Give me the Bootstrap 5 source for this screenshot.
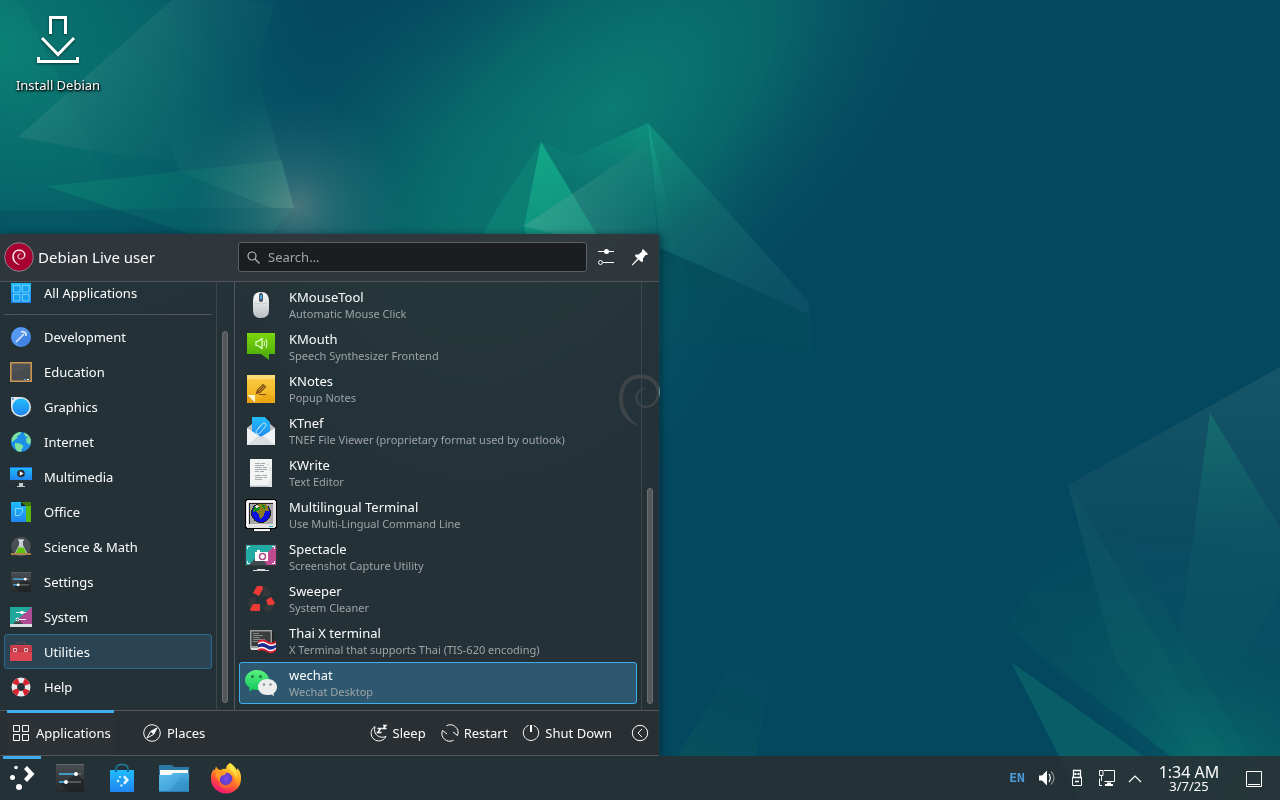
<!DOCTYPE html>
<html lang="en">
<head>
<meta charset="utf-8">
<meta name="viewport" content="width=device-width, initial-scale=1">
<title>Plasma Desktop</title>
<link href="https://cdn.jsdelivr.net/npm/bootstrap@5.3.0/dist/css/bootstrap.min.css" rel="stylesheet">
<style>
  :root { --edge: #50565a; --accent: #3daee9; --ink: #fcfcfc; --soft: #9ea3a6; }
  body { font-family: "Noto Sans", sans-serif; font-size: 13px; line-height: 17px; color: var(--ink); background: #04485f; }
  button { color: inherit; }
  .wallpaper { position: fixed; inset: 0; width: 100%; height: 100%; z-index: -1; }
  .plain { background: none; border: 0; padding: 0; }

  .desk-icon { width: 116px; padding-top: 8px; text-shadow: 1px 1px 2px #000, 0 1px 3px #000; }
  .desk-icon svg { filter: drop-shadow(0 1px 1px rgba(0,0,0,.5)); }
  .desk-icon span { margin-top: 5px; }

  .launcher { width: 660px; max-width: 100%; border-right: 1px solid rgba(20,40,50,.35); border-radius: 0 4px 0 0; overflow: hidden; box-shadow: 2px 0 6px rgba(0,30,40,.5); }
  .launch-head { height: 48px; background: rgba(49,54,59,.97); border-bottom: 1px solid var(--edge); padding: 0 2px 1px 4px; }
  .user-box { width: 234px; font-size: 15px; line-height: 20px; }
  .search-box { height: 30px; margin-right: 2px; padding: 0 8px; background: #1b1e20; border: 1px solid #5d6164; border-radius: 3px; }
  .search-box input { background: none; border: 0; outline: 0; color: var(--ink); }
  .search-box input::placeholder { color: #a1a5a8; opacity: 1; }
  .head-btn { width: 34px; height: 34px; }

  .launch-body { height: 428px; background: rgba(42,46,50,.86); }
  .cats { width: 217px; padding: 0 4px 6px; border-right: 1px solid #3c474c; overflow: hidden; }
  .cat-item { flex: none; height: 35px; padding: 1px 5px 0; gap: 12px; border: 1px solid transparent; border-radius: 3px; background: none; text-align: left; }
  .cat-item.chosen { background: #2a4453; border-color: #2d6a8b; }
  .cat-rule { flex: none; height: 1px; margin: 4px 0; background: var(--edge); }
  .track { width: 18px; padding: 0 7px 7px 5px; border-right: 1px solid var(--edge); }
  .track.end { border: 0; border-left: 1px solid #3c474c; padding-bottom: 6px; }
  .thumb { width: 6px; border-radius: 3px; background: #54585b; border: 1px solid #6a6e71; }
  .thumb.long { height: 372px; }
  .thumb.half { height: 216px; }
  .apps { padding: 2px 4px 6px; }
  .app-item { height: 42px; padding: 0 5px; gap: 12px; border: 1px solid transparent; border-radius: 3px; background: none; text-align: left; }
  .app-item.chosen { background: #2d586f; border-color: var(--accent); }
  .app-note { font-size: 11px; line-height: 16px; color: var(--soft); }

  .launch-foot { height: 46px; background: rgba(42,46,50,.97); border-top: 1px solid var(--edge); border-bottom: 1px solid var(--edge); padding: 0 10px 0 7px; }
  .foot-tab { width: 107px; margin-top: -1px; border-top: 3px solid transparent; padding-bottom: 2px; gap: 6px; }
  .foot-tab.chosen { padding-left: 5px; border-top-color: var(--accent); background: rgba(255,255,255,.01); }
  .foot-tab.other { margin-left: 29px; }
  .foot-btn { gap: 5px; margin-right: 15px; }

  .taskbar { height: 44px; background: rgba(42,46,50,.86); }
  .task { width: 52px; }
  .task.first { width: 44px; padding: 0 3px; }
  .task.first .bar { height: 3px; background: var(--accent); }
  .tray { padding-right: 2px; }
  .tray-btn { width: 30px; }
  .tray-btn.narrow { width: 26px; }
  .lang { color: #4b9bd8; font: bold 13px/16px "DejaVu Sans Mono", monospace; }
  .clock { width: 82px; text-align: center; }
  .clock .hour { font-size: 16px; line-height: 16px; }
  .clock .day { font-size: 13px; line-height: 12px; }
  .show-desk { width: 48px; }
</style>
</head>
<body class="min-vh-100 d-flex flex-column overflow-hidden">

<svg class="wallpaper" viewBox="0 0 1280 800" preserveAspectRatio="xMidYMid slice" aria-hidden="true">
  <defs>
    <radialGradient id="gl1" gradientUnits="userSpaceOnUse" cx="0" cy="0" r="1" gradientTransform="translate(0 45) rotate(30) scale(360 280)"><stop offset="0" stop-color="#0b8276"/><stop offset=".5" stop-color="#09706d" stop-opacity=".75"/><stop offset="1" stop-color="#06586a" stop-opacity="0"/></radialGradient>
    <radialGradient id="gl2" gradientUnits="userSpaceOnUse" cx="0" cy="0" r="1" gradientTransform="translate(610 110) rotate(-42) scale(440 235)"><stop offset="0" stop-color="#0b7c73"/><stop offset=".45" stop-color="#0a6f6c" stop-opacity=".75"/><stop offset="1" stop-color="#065263" stop-opacity="0"/></radialGradient>
    <radialGradient id="gl3" gradientUnits="userSpaceOnUse" cx="297" cy="207" r="110"><stop offset="0" stop-color="#8d9a98" stop-opacity=".5"/><stop offset=".35" stop-color="#5f8d8e" stop-opacity=".3"/><stop offset="1" stop-color="#2f7280" stop-opacity="0"/></radialGradient>
    <radialGradient id="gl4" gradientUnits="userSpaceOnUse" cx="480" cy="250" r="280"><stop offset="0" stop-color="#0b7d70" stop-opacity=".85"/><stop offset="1" stop-color="#086068" stop-opacity="0"/></radialGradient>
    <radialGradient id="gl5" gradientUnits="userSpaceOnUse" cx="1200" cy="780" r="150"><stop offset="0" stop-color="#0a7a70" stop-opacity=".75"/><stop offset="1" stop-color="#085f68" stop-opacity="0"/></radialGradient>
    <linearGradient id="pa" gradientUnits="userSpaceOnUse" x1="90" y1="60" x2="215" y2="150"><stop offset="0" stop-color="#4f9590" stop-opacity=".24"/><stop offset="1" stop-color="#2c6d77" stop-opacity="0"/></linearGradient>
    <linearGradient id="pb" gradientUnits="userSpaceOnUse" x1="47" y1="186" x2="294" y2="208"><stop offset="0" stop-color="#0b8474" stop-opacity=".6"/><stop offset=".6" stop-color="#0b7c72" stop-opacity=".35"/><stop offset="1" stop-color="#3b8f80" stop-opacity=".3"/></linearGradient>
    <linearGradient id="pm" gradientUnits="userSpaceOnUse" x1="290" y1="205" x2="240" y2="90"><stop offset="0" stop-color="#3b9a87" stop-opacity=".4"/><stop offset="1" stop-color="#2c7d77" stop-opacity="0"/></linearGradient>
    <linearGradient id="pc" gradientUnits="userSpaceOnUse" x1="541" y1="142" x2="560" y2="240"><stop offset="0" stop-color="#12a888"/><stop offset="1" stop-color="#10917f"/></linearGradient>
    <linearGradient id="pd" gradientUnits="userSpaceOnUse" x1="648" y1="123" x2="610" y2="220"><stop offset="0" stop-color="#0f9882" stop-opacity=".8"/><stop offset="1" stop-color="#0b746f" stop-opacity=".2"/></linearGradient>
    <linearGradient id="pe" gradientUnits="userSpaceOnUse" x1="648" y1="123" x2="770" y2="330"><stop offset="0" stop-color="#10947f" stop-opacity=".95"/><stop offset=".45" stop-color="#11686c" stop-opacity=".75"/><stop offset="1" stop-color="#12566a" stop-opacity=".5"/></linearGradient>
    <linearGradient id="pf" gradientUnits="userSpaceOnUse" x1="524" y1="226" x2="700" y2="230"><stop offset="0" stop-color="#5fb0a0" stop-opacity=".4"/><stop offset=".5" stop-color="#3b8d88" stop-opacity=".3"/><stop offset="1" stop-color="#1e6b74" stop-opacity="0"/></linearGradient>
    <linearGradient id="pg" gradientUnits="userSpaceOnUse" x1="648" y1="123" x2="680" y2="290"><stop offset="0" stop-color="#16a98c"/><stop offset=".5" stop-color="#137672" stop-opacity=".5"/><stop offset="1" stop-color="#0a5660" stop-opacity="0"/></linearGradient>
    <linearGradient id="ph" gradientUnits="userSpaceOnUse" x1="740" y1="260" x2="720" y2="370"><stop offset="0" stop-color="#054e5c"/><stop offset="1" stop-color="#04505a" stop-opacity="0"/></linearGradient>
    <linearGradient id="pi" gradientUnits="userSpaceOnUse" x1="1200" y1="380" x2="1180" y2="680"><stop offset="0" stop-color="#195669"/><stop offset=".5" stop-color="#0e4c61"/><stop offset="1" stop-color="#09586a" stop-opacity="0"/></linearGradient>
    <linearGradient id="pj" gradientUnits="userSpaceOnUse" x1="1210" y1="413" x2="1230" y2="690"><stop offset="0" stop-color="#15706f" stop-opacity=".85"/><stop offset=".45" stop-color="#0d5866" stop-opacity=".7"/><stop offset="1" stop-color="#095663" stop-opacity=".1"/></linearGradient>
    <linearGradient id="pk" gradientUnits="userSpaceOnUse" x1="1060" y1="530" x2="1170" y2="756"><stop offset="0" stop-color="#05505d" stop-opacity=".2"/><stop offset=".5" stop-color="#065560"/><stop offset="1" stop-color="#08606a"/></linearGradient>
    <linearGradient id="pl" gradientUnits="userSpaceOnUse" x1="765" y1="640" x2="720" y2="756"><stop offset="0" stop-color="#064b5b" stop-opacity="0"/><stop offset="1" stop-color="#06505e"/></linearGradient>
    <linearGradient id="pn" gradientUnits="userSpaceOnUse" x1="1240" y1="530" x2="1250" y2="756"><stop offset="0" stop-color="#06505e" stop-opacity="0"/><stop offset="1" stop-color="#075c64"/></linearGradient>
  </defs>
  <rect width="1280" height="800" fill="#04485f"/>
  <rect width="1280" height="800" fill="url(#gl4)"/>
  <rect width="1280" height="800" fill="url(#gl1)"/>
  <rect width="1280" height="800" fill="url(#gl2)"/>
  <path d="M20 0H275L256 72L294 208L120 209L50 60Z" fill="#075e68" opacity=".2"/>
  <path d="M18 137L172 0H245L275 5L256 72L290 190L200 165L95 151Z" fill="url(#pa)"/>
  <path d="M0 211L294 208L330 234H0Z" fill="#05505f" opacity=".45"/>
  <path d="M256 72L294 208L272 208L180 172L150 100Z" fill="url(#pm)"/>
  <path d="M115 209L294 208L270 234H190Z" fill="#0c7570" opacity=".35"/>
  <path d="M47 186L282 160L294 208L115 209Z" fill="url(#pb)"/>
  <rect width="1280" height="800" fill="url(#gl3)"/>
  <path d="M541 142L500 203L475 250H600L524 226Z" fill="#0d8c79" opacity=".5"/>
  <path d="M648 123L575 157L541 142L597 234L657 250L655 200Z" fill="url(#pd)"/>
  <path d="M541 142L524 226L528 240H600Z" fill="url(#pc)"/>
  <path d="M648 123L808 301L809 314L660 248L655 200Z" fill="url(#pe)"/>
  <path d="M808 301L814 360L660 340V248L809 314Z" fill="url(#ph)"/>
  <path d="M524 226L602 174L648 140L660 260Z" fill="url(#pf)"/>
  <path d="M648 123L693 310L657 210Z" fill="url(#pg)"/>
  <path d="M678 756L747 640L779 630L756 756Z" fill="url(#pl)"/>
  <path d="M1071 525L1005 627L1150 756L1170 775H1260L1160 600L1130 540Z" fill="url(#pk)" opacity=".6"/>
  <path d="M1020 590L1190 775H1229L1130 600Z" fill="#096068" opacity=".15"/>
  <path d="M1280 530V800H1220L1120 600Z" fill="url(#pn)" opacity=".7"/>
  <path d="M1280 367L1068 485L1115 660L1180 730L1280 700Z" fill="url(#pi)" opacity=".85"/>
  <path d="M1083 507L1068 485L1115 660L1190 756H1229L1180 680Z" fill="#157070" opacity=".18"/>
  <path d="M1210 413L1178 650L1184 740L1221 693L1280 593V528Z" fill="url(#pj)"/>
  <rect x="960" y="540" width="320" height="260" fill="url(#gl5)" opacity=".75"/>
  <path d="M1005 627L1011 662L1144 756H1170Z" fill="#04485f" opacity=".7"/>
  <path d="M900 756L1011 662L1059 756V800H900ZM1005 627L1011 662L900 756Z" fill="#04485f" opacity=".8"/>
  <path d="M1011 662L1059 756L1080 800H1200L1144 756Z" fill="#085d67"/>
  <path transform="translate(619 374)" fill="#fff" opacity=".7" d="M22.500 53C8 49 0 39 0 25C0 10 9 0 21 .5C33 0 42 9 41 19C40 29 33 34 26 34C20 33 16 28 16.500 23C17 17 22 13.500 27 14.500C22 15.500 18.500 19 18.500 24C18.500 29 22 32 27 32C33 31.500 38 26 38 19C37.500 10 31 4.500 22 4.500C11 4 3.500 12 4 25C4.500 38 12 48 22.500 53Z"/>
</svg>

<svg class="position-absolute" width="0" height="0" aria-hidden="true">
  <defs>
    <linearGradient id="blue" x1="0" y1="0" x2="0" y2="1"><stop offset="0" stop-color="#20bdfc"/><stop offset="1" stop-color="#2084f0"/></linearGradient>
    <linearGradient id="dark" x1="0" y1="0" x2="0" y2="1"><stop offset="0" stop-color="#4a4f54"/><stop offset="1" stop-color="#26292c"/></linearGradient>
    <linearGradient id="white" x1="0" y1="0" x2="0" y2="1"><stop offset="0" stop-color="#fdfdfd"/><stop offset="1" stop-color="#b9bec2"/></linearGradient>
    <linearGradient id="green" x1="0" y1="0" x2="0" y2="1"><stop offset="0" stop-color="#7bd60a"/><stop offset="1" stop-color="#47a80b"/></linearGradient>
    <linearGradient id="gold" x1="0" y1="0" x2="0" y2="1"><stop offset="0" stop-color="#f9ce46"/><stop offset="1" stop-color="#f0ad14"/></linearGradient>
    <linearGradient id="fold" x1="0" y1="0" x2="1" y2="1"><stop offset="0" stop-color="#5cc0f0"/><stop offset="1" stop-color="#3391cb"/></linearGradient>
    <linearGradient id="wgreen" x1="0" y1="0" x2="0" y2="1"><stop offset="0" stop-color="#5af07f"/><stop offset="1" stop-color="#12c75b"/></linearGradient>
    <linearGradient id="fox" x1=".8" y1="0" x2=".3" y2="1"><stop offset="0" stop-color="#fff04a"/><stop offset=".4" stop-color="#ffa51e"/><stop offset=".7" stop-color="#ff4a3c"/><stop offset="1" stop-color="#e8127a"/></linearGradient>
    <radialGradient id="foxin"><stop offset="0" stop-color="#7a4cf0"/><stop offset="1" stop-color="#5b3cc4"/></radialGradient>
    <symbol id="i-conf" viewBox="0 0 28 28"><path d="M0 0H28V28H0Z" fill="url(#dark)"/><path d="M4 20L21 10L28 16V28H12Z" fill="#1d2022" opacity=".6"/><path d="M0 .5H28" stroke="#62676b"/><path d="M3 10H25M3 18H25" stroke="#66696c" stroke-width="1.500"/><path d="M3 10H20M3 18H10" stroke="#3daee9" stroke-width="1.500"/><circle cx="20" cy="10" r="2" fill="#fff"/><circle cx="10" cy="18" r="2" fill="#fff"/></symbol>
    <symbol id="i-tune" viewBox="0 0 18 18"><path d="M1 3.500H17M6 14.500H17" stroke="#fff" stroke-width="1.200"/><circle cx="9.500" cy="3.500" r="2.500" fill="#fff"/><circle cx="3.500" cy="14.500" r="2" fill="none" stroke="#fff"/></symbol>
  </defs>
</svg>

<main class="flex-grow-1 d-flex flex-column align-items-start">
  <button type="button" class="plain desk-icon d-flex flex-column align-items-center">
    <svg width="64" height="64" fill="none" stroke="#fff" stroke-width="3"><path d="M24.500 26V9.500H39.500V26M16 30L32 46.500L48 30M12.500 49V53.500H51.500V49"/></svg>
    <span>Install Debian</span>
  </button>

  <section class="launcher mt-auto" aria-label="Application Launcher">
    <header class="launch-head d-flex align-items-center">
      <div class="user-box d-flex align-items-center gap-1 flex-shrink-0">
        <svg width="30" height="30" viewBox="0 0 30 30" aria-hidden="true"><circle cx="15" cy="15" r="14.300" fill="#a80030" stroke="#85888b"/><path transform="translate(8.500 7.500) scale(.31 .29)" fill="#fff" stroke="#fff" d="M22.500 53C8 49 0 39 0 25C0 10 9 0 21 .5C33 0 42 9 41 19C40 29 33 34 26 34C20 33 16 28 16.500 23C17 17 22 13.500 27 14.500C22 15.500 18.500 19 18.500 24C18.500 29 22 32 27 32C33 31.500 38 26 38 19C37.500 10 31 4.500 22 4.500C11 4 3.500 12 4 25C4.500 38 12 48 22.500 53Z"/></svg>
        <span>Debian Live user</span>
      </div>
      <label class="search-box flex-grow-1 d-flex align-items-center gap-2">
        <svg width="13" height="13" fill="none" stroke="#b5b8ba" stroke-width="1.200" aria-hidden="true"><circle cx="5" cy="5" r="4"/><path d="M8 8L12.500 12.500"/></svg>
        <input class="flex-grow-1 p-0" type="text" placeholder="Search..." aria-label="Search">
      </label>
      <button type="button" class="plain head-btn" aria-label="Configure"><svg width="18" height="18"><use href="#i-tune"/></svg></button>
      <button type="button" class="plain head-btn" aria-label="Keep open"><svg width="18" height="18" fill="#fff"><path d="M12 1L17 6L16 7H14.500L12 10.500V13.500L10.500 14L7.500 11.500L1.500 17.500L.8 16.800L6.500 10.500L4 8L4.500 6.500H7.500L11 3.500V2Z"/></svg></button>
    </header>

    <div class="launch-body d-flex">
      <nav class="cats d-flex flex-column justify-content-end flex-shrink-0" aria-label="Categories">
        <button type="button" class="cat-item d-flex align-items-center"><svg width="22" height="22"><path d="M1 1H21V21H1Z" fill="url(#blue)"/><path d="M3.500 3.500H10V10H3.500ZM12.500 3.500H19V10H12.500ZM3.500 12.500H10V19H3.500ZM12.500 12.500H19V19H12.500Z" fill="#16a0ee" stroke="#6ccfff"/></svg>All Applications</button>
        <div class="cat-rule"></div>
        <button type="button" class="cat-item d-flex align-items-center"><svg width="22" height="22"><circle cx="11" cy="11" r="10" fill="#5598f2"/><path d="M7 17L18 6L21 11A10 10 0 0 1 11 21Z" fill="#2f6fd0" opacity=".5"/><path d="M6 16L14 8" stroke="#dfe9f5" stroke-width="1.500"/><path d="M11 6C13 5.200 14.500 5.800 16 7.500V10" stroke="#dfe9f5" stroke-width="1.600" fill="none"/></svg>Development</button>
        <button type="button" class="cat-item d-flex align-items-center"><svg width="22" height="22"><path d="M.8 1.800H21.200V20.200H.8Z" fill="#4e5255" stroke="#c8964f" stroke-width="1.600"/><path d="M2 13L20 6V19H2Z" fill="#484c4f"/><path d="M14 18.500H16" stroke="#3daee9"/><path d="M17 18.500H19" stroke="#fff"/></svg>Education</button>
        <button type="button" class="cat-item d-flex align-items-center"><svg width="22" height="22"><path d="M1 1H11A10 10 0 1 1 1 11Z" fill="#e4e6e8"/><circle cx="11" cy="11" r="8.500" fill="url(#blue)"/><circle cx="2.800" cy="2.800" r="1" fill="#2f8fe8"/></svg>Graphics</button>
        <button type="button" class="cat-item d-flex align-items-center"><svg width="22" height="22"><circle cx="11" cy="11" r="10" fill="#1d8fe8"/><path d="M1.500 8C3 3.500 7 1 11 1L10 3.500L7 5L7.500 7L4.500 9L2 11.500ZM14 1.500C18 3 20 5.500 21 9L20 14L16.500 11.500L16 8L18 6L15 5ZM5 12L10 12.500L13.500 15L12 18L10.500 21L7 20L5 16Z" fill="#7fe3a0"/></svg>Internet</button>
        <button type="button" class="cat-item d-flex align-items-center"><svg width="22" height="22"><path d="M0 1H22V14H0Z" fill="url(#blue)"/><path d="M0 1H22V2H0Z" fill="#1d6fd8"/><path d="M0 14H22V15H0Z" fill="#303438"/><circle cx="11" cy="7.500" r="3.800" fill="#2b2f33"/><path d="M9.800 5.300V9.700L13.500 7.500Z" fill="#fff"/><path d="M9 17H13V20H15V21H7V20H9Z" fill="#c5c9cc"/></svg>Multimedia</button>
        <button type="button" class="cat-item d-flex align-items-center"><svg width="22" height="22"><path d="M1 1H12L21 5V21H1Z" fill="url(#blue)"/><path d="M16 4L21 5V21H16Z" fill="#58b910"/><path d="M11 1H21V5H16Z" fill="#3f7d0a"/><path d="M11 1L16 5H11Z" fill="#222"/><path d="M5.500 7.500H12.500V11L9.500 14.500H5.500Z" fill="none" stroke="#7fdcff"/></svg>Office</button>
        <button type="button" class="cat-item d-flex align-items-center"><svg width="22" height="22"><circle cx="11" cy="10.500" r="9.800" fill="#4b5054"/><path d="M9 4H13V9L17 17H5L9 9Z" fill="#c7cccf"/><path d="M8.300 11.500H13.700L16 17H6Z" fill="#5fc30c"/><path d="M8 4H14" stroke="#fff"/><path d="M1 18H21" stroke="#d29a50" stroke-width="1.500"/></svg>Science &amp; Math</button>
        <button type="button" class="cat-item d-flex align-items-center"><svg width="22" height="22" viewBox="-1 -1 22 22"><use href="#i-conf" width="20" height="20"/></svg>Settings</button>
        <button type="button" class="cat-item d-flex align-items-center"><svg width="22" height="22"><path d="M0 1H22V18H0Z" fill="#1fa99c"/><path d="M22 1V18H7L6 15Z" fill="#b04a95"/><path d="M3 18L8 13L13 18Z" fill="#40474b"/><path d="M0 18H22V21H0Z" fill="#dcdfe1"/><path d="M6 6.500H16M9 13.500H16" stroke="#eef"/><circle cx="12" cy="6.500" r="1.800" fill="#fff"/><circle cx="7.500" cy="13.500" r="1.500" fill="none" stroke="#fff"/></svg>System</button>
        <button type="button" class="cat-item chosen d-flex align-items-center" aria-current="true"><svg width="22" height="22"><path d="M6.500 5V2.500Q6.500 1.500 7.500 1.500H14.500Q15.500 1.500 15.500 2.500V5" fill="none" stroke="#4a4d50" stroke-width="1.500"/><path d="M1 4H21L22 10V20H0V10Z" fill="#da4453"/><path d="M0 10H22V11H0Z" fill="#b5303f"/><path d="M0 5H22V10H0Z" fill="#c53b4a"/><path d="M3.500 7.500H6.500V10.500H3.500ZM14.500 7.500H17.500V10.500H14.500Z" fill="#b5303f" stroke="#d9c5c8"/></svg>Utilities</button>
        <button type="button" class="cat-item d-flex align-items-center"><svg width="22" height="22" fill="none"><circle cx="11" cy="11" r="6.700" stroke="#e8e9ea" stroke-width="5.600"/><circle cx="11" cy="11" r="6.700" stroke="#d8232f" stroke-width="5.600" stroke-dasharray="5.260 5.260" stroke-dashoffset="-2.630"/></svg>Help</button>
      </nav>
      <div class="track d-flex flex-column justify-content-end flex-shrink-0"><div class="thumb long"></div></div>

      <div class="apps flex-grow-1 d-flex flex-column">
        <button type="button" class="app-item d-flex align-items-center"><svg width="32" height="32"><path d="M8 12Q8 3 16 3Q24 3 24 12V21Q24 29 16 29Q8 29 8 21Z" fill="url(#white)"/><path d="M9 14Q16 16 23 14" stroke="#c9ced2" fill="none"/><path d="M16 3V13" stroke="#9aa0a5"/><rect x="14" y="4" width="4" height="9" rx="2" fill="#46535c"/><rect x="15" y="6" width="2" height="4" fill="#3daee9"/></svg><span><span class="d-block">KMouseTool</span><span class="d-block app-note">Automatic Mouse Click</span></span></button>
        <button type="button" class="app-item d-flex align-items-center"><svg width="32" height="32"><path d="M2 2H30V23H24V29L16 23H2Z" fill="url(#green)"/><path d="M11 10.500H13L17 7.500V17.500L13 14.500H11Z" fill="none" stroke="#eaffd8" stroke-width="1.200"/><path d="M19 10Q20 12.500 19 15M21 8Q23 12.500 21 17" fill="none" stroke="#eaffd8"/></svg><span><span class="d-block">KMouth</span><span class="d-block app-note">Speech Synthesizer Frontend</span></span></button>
        <button type="button" class="app-item d-flex align-items-center"><svg width="32" height="32"><path d="M2 2H30V30H10L2 22Z" fill="url(#gold)"/><path d="M2 2H30V6H2Z" fill="#fadb78"/><path d="M11 30L20 20L30 25V30Z" fill="#e09a10" opacity=".4"/><path d="M2 22H10V30Z" fill="#fff3c8"/><path d="M2 22V30H10Z" fill="#e9a20f"/><path d="M11.500 20.500L12.500 17L18 11.500L20.500 14L15 19.500ZM12 20L19.500 12.500M14 21.500H21" fill="none" stroke="#7d4d16" stroke-width="1.200"/></svg><span><span class="d-block">KNotes</span><span class="d-block app-note">Popup Notes</span></span></button>
        <button type="button" class="app-item d-flex align-items-center"><svg width="32" height="32"><path d="M2 13L8 8H24L30 13V30H2Z" fill="#b8bdc1"/><path d="M7 2H20L25 7V20L16 24L7 19Z" fill="url(#blue)"/><path d="M20 2H25V7Z" fill="#23282b"/><path d="M12 15L17 9Q19 7 20.500 8.500T20 12L15 18Q13 20 11.500 18.500T12 15L16 10.500" fill="none" stroke="#b8e6ff"/><path d="M2 13L16 22L30 13V30H2Z" fill="#f0f2f3"/><path d="M2 30L14 20.500L16 22L18 20.500L30 30Z" fill="#dadee0"/></svg><span><span class="d-block">KTnef</span><span class="d-block app-note">TNEF File Viewer (proprietary format used by outlook)</span></span></button>
        <button type="button" class="app-item d-flex align-items-center"><svg width="32" height="32"><path d="M5 2H27V30H5Z" fill="#f3f4f4"/><path d="M5 28.500H27V30H5Z" fill="#c3c6c8"/><path d="M20 7H24V14H27L23 30H27V11Z" fill="#e3e4e5"/><path d="M10 6.500H15M16 6.500H20M10 8.500H19M10 10.500H17M18 10.500H22M10 12.500H22M10 14.500H14M15 14.500H19M10 18.500H16M17 18.500H22M10 20.500H18M19 20.500H22M10 22.500H17" stroke="#a5a9ac"/></svg><span><span class="d-block">KWrite</span><span class="d-block app-note">Text Editor</span></span></button>
        <button type="button" class="app-item d-flex align-items-center"><svg width="32" height="32" shape-rendering="crispEdges"><path d="M8 32V30L11 28H21L25 30V32Z" fill="#e8e8e8" stroke="#000"/><path d="M2 .5H30L31.500 2V28L30 29.500H2L.5 28V2Z" fill="#e2e2e2" stroke="#000"/><path d="M2 27V2H30" fill="none" stroke="#fff"/><path d="M4 4H28V25H4Z" fill="#a8a8a8"/><path d="M4 25V4H28" fill="none" stroke="#222"/><circle cx="16" cy="14" r="9.500" fill="#0b10e0" stroke="#222"/><path d="M11 6L15 5H20L23 8L24 12L20 12L19 16L17 19L15 20L14 15L11 13L9 11Z" fill="#8a7d1c"/><path d="M9 8L13 6L15 9L12 12L8 13ZM17 5L20 8V10L17 8Z" fill="#118a22"/><path d="M10 7L12 6L14 8L11 9Z" fill="#ddd"/><path d="M24 27H28" stroke="#18b7c8" stroke-width="1"/><path d="M9 31H24" stroke="#fff"/></svg><span><span class="d-block">Multilingual Terminal</span><span class="d-block app-note">Use Multi-Lingual Command Line</span></span></button>
        <button type="button" class="app-item d-flex align-items-center"><svg width="32" height="32"><path d="M0 3H32V25H0Z" fill="#34393d"/><path d="M1 4H31V24H1Z" fill="#22aaa5"/><path d="M31 4V24H14L12 20Z" fill="#c04a90"/><path d="M4 24L14 13L22 24Z" fill="#3f4b50"/><path d="M2.500 8V5.500H5M27 5.500H29.500V8M29.500 20V22.500H27M5 22.500H2.500V20" fill="none" stroke="#e8f4f4"/><path d="M10 11H12V9H15V11H23V20H10Z" fill="#fff"/><circle cx="17.500" cy="15.500" r="3" fill="#fff" stroke="#b04a8a" stroke-width="1.500"/><path d="M12 28H20V29H24V30H8V29H12Z" fill="#d5d9db"/></svg><span><span class="d-block">Spectacle</span><span class="d-block app-note">Screenshot Capture Utility</span></span></button>
        <button type="button" class="app-item d-flex align-items-center"><svg width="32" height="32"><path d="M16 3H21L24 8L27 7L23 14L17 12L19 10Z" fill="#36393c"/><path d="M18 25L23 20V22H29L26 28H22V30Z" fill="#36393c"/><path d="M3 16L10 14L12 21L9 20L5 25L3 20L5 17Z" fill="#36393c"/><path d="M12 3H17L18 6L14 13L8 10Z" fill="#ee3a34"/><path d="M21 17L26 14L30 20L28 22H23Z" fill="#ee3a34"/><path d="M8 21H15V28H6L5 26Z" fill="#ee3a34"/></svg><span><span class="d-block">Sweeper</span><span class="d-block app-note">System Cleaner</span></span></button>
        <button type="button" class="app-item d-flex align-items-center"><svg width="32" height="32"><path d="M5 5H27V24H5Z" fill="#9a9c99"/><path d="M6.500 6.500H25.500V21H6.500Z" fill="#3a3d3e"/><path d="M8 8.500H14M8 10.500H18M8 12.500H15M8 14.500H20M8 16.500H13" stroke="#a8aaa8" stroke-width=".7"/><path d="M27 5L29 8V18H27Z" fill="#222"/><path d="M6 23H15V25H6Z" fill="#dcdcd8"/><path d="M13 16Q18 13 22 16T31 16V26Q26 30 22 27T13 26Z" fill="#e02030"/><path d="M13 18Q18 15 22 18T31 18V24Q26 28 22 25T13 24Z" fill="#fff"/><path d="M13 19.500Q18 16.500 22 19.500T31 19.500V22.500Q26 26.500 22 23.500T13 22.500Z" fill="#1c2a8c"/></svg><span><span class="d-block">Thai X terminal</span><span class="d-block app-note">X Terminal that supports Thai (TIS-620 encoding)</span></span></button>
        <button type="button" class="app-item chosen d-flex align-items-center" aria-current="true"><svg width="32" height="32"><path d="M12 3C18.500 3 24 7.500 24 13S18.500 23 12 23Q9.500 23 8 22.300L4.500 24.500V20.500Q0 17.500 0 13C0 7.500 5.500 3 12 3Z" fill="url(#wgreen)"/><circle cx="7.500" cy="9.500" r="1.500" fill="#187c3f"/><circle cx="15.500" cy="9.500" r="1.500" fill="#187c3f"/><path d="M22.500 12C27.500 12 32 15.500 32 20Q32 23.500 28.500 26.500L29 29L26 27.500Q24.500 28 22.500 28C17 28 13 24.500 13 20S17 12 22.500 12Z" fill="#eceeee"/><circle cx="19" cy="17.500" r="1.200" fill="#858a8c"/><circle cx="25.500" cy="17.500" r="1.200" fill="#858a8c"/></svg><span><span class="d-block">wechat</span><span class="d-block app-note">Wechat Desktop</span></span></button>
      </div>
      <div class="track end d-flex flex-column justify-content-end flex-shrink-0"><div class="thumb half"></div></div>
    </div>

    <footer class="launch-foot d-flex">
      <button type="button" class="plain foot-tab chosen d-flex align-items-center"><svg width="18" height="18" fill="none" stroke="#fcfcfc"><path d="M1.500 1.500H7.500V7.500H1.500ZM10.500 1.500H16.500V7.500H10.500ZM1.500 10.500H7.500V16.500H1.500ZM10.500 10.500H16.500V16.500H10.500Z"/></svg>Applications</button>
      <button type="button" class="plain foot-tab other d-flex align-items-center"><svg width="18" height="18"><circle cx="9" cy="9" r="8.300" fill="none" stroke="#fcfcfc"/><path d="M14 4L10.500 10.500L4 14L7.500 7.500Z" fill="none" stroke="#fcfcfc"/><path d="M14 4L10.500 10.500L7.500 7.500Z" fill="#fcfcfc"/></svg>Places</button>
      <button type="button" class="plain foot-btn ms-auto d-flex align-items-center"><svg width="18" height="18" fill="none" stroke="#fcfcfc"><path d="M5 2.500C2.500 4 1 6.500 1 9.500A8 8 0 0 0 8.500 17C11.500 17 14.500 15.500 16 12.500C10 15 2.500 11 5 2.500Z"/><path d="M7.500 4.500H11L7.500 8.500H11.500M13 1.500H16L13 4.500H16.500" stroke-width="1.300"/></svg>Sleep</button>
      <button type="button" class="plain foot-btn d-flex align-items-center"><svg width="18" height="18" fill="none" stroke="#fcfcfc"><path d="M5.500 1.800A7.800 7.800 0 0 1 16.500 11.500M12 8L16.500 11.500M12.500 16.200A7.800 7.800 0 0 1 1.500 6.500M6 10L1.500 6.500"/></svg>Restart</button>
      <button type="button" class="plain foot-btn d-flex align-items-center"><svg width="18" height="18" fill="none" stroke="#fcfcfc"><path d="M6.500 1.500A7.700 7.700 0 1 0 11.500 1.500"/><path d="M9 1V8" stroke-width="2"/></svg>Shut Down</button>
      <button type="button" class="plain d-flex align-items-center ms-1" aria-label="Hide leave options"><svg width="18" height="18" fill="none" stroke="#fcfcfc"><circle cx="9" cy="9" r="7.700"/><path d="M11 5L7 9L11 13"/></svg></button>
    </footer>
  </section>
</main>

<footer class="taskbar d-flex align-items-stretch">
  <button type="button" class="plain task first d-flex flex-column" aria-label="Application Launcher"><span class="bar d-block w-100"></span><svg class="mx-auto" width="38" height="38" fill="#fff"><path d="M21 10L24 7L31.500 15L24 23L21 20L25.500 15Z"/><circle cx="13" cy="8.500" r="1.800"/><circle cx="9.500" cy="18.500" r="2.500"/><circle cx="16" cy="28" r="3"/></svg></button>
  <button type="button" class="plain task" aria-label="System Settings"><svg width="28" height="28"><use href="#i-conf"/></svg></button>
  <button type="button" class="plain task" aria-label="Discover"><svg width="32" height="32"><path d="M10 9V7Q10 2.500 16 2.500T22 7V9" fill="none" stroke="#1c7d9c" stroke-width="1.500"/><path d="M4 8H28V30H4Z" fill="url(#blue)"/><path d="M10 8V10M22 8V10" stroke="#0d5f9e" stroke-width="2"/><path d="M17 15L19 13.500L23 18L19 22.500L17 21L19.500 18Z" fill="#e3f6ff"/><circle cx="14" cy="15" r="1" fill="#e3f6ff"/><circle cx="12" cy="19" r="1.200" fill="#e3f6ff"/><circle cx="15.500" cy="23.500" r="1.300" fill="#bce6ff"/></svg></button>
  <button type="button" class="plain task" aria-label="File Manager"><svg width="32" height="32"><path d="M1 3H14L16 5H31V16H1Z" fill="#2a78a5"/><path d="M2 8H30V14H2Z" fill="#f7f8f8"/><path d="M1 13H13L15 11H31V30H1Z" fill="url(#fold)"/><path d="M10 30L24 15L31 20V30Z" fill="#2c86bd" opacity=".35"/><path d="M1 29.500H31" stroke="#2d7fb0"/></svg></button>
  <button type="button" class="plain task" aria-label="Firefox"><svg width="32" height="32"><path d="M20 1Q25 4 26.500 8Q27.500 7.500 27.500 6Q31.500 11 31 17A15 14.500 0 0 1 1 17Q.5 11 4 7L4.500 9L6 4.500Q8 8 11 8Q13 6 16 7Q16 3 20 1Z" fill="url(#fox)"/><circle cx="16" cy="17" r="6.500" fill="url(#foxin)"/><path d="M6 10Q9 8 12 9.500Q14 11 17 10.500Q15 13.500 12 13.500Q9 16 10 19.500Q5.500 16 6 10Z" fill="#ff9a2a"/><path d="M10 19.500Q13 25 19 22Q24 18 21 12Q27 18 23 23Q18 29 11 25Q8 22 10 19.500Z" fill="#ff6a35" opacity=".8"/><path d="M20 1Q18 6 22 9T25.500 16Q28 12 25 7.500T20 1Z" fill="#ffe545"/></svg></button>

  <div class="tray ms-auto d-flex align-items-stretch">
    <button type="button" class="plain tray-btn lang">EN</button>
    <button type="button" class="plain tray-btn" aria-label="Volume"><svg width="18" height="18"><path d="M1 6.500H4L9 1.500V16.500L4 11.500H1Z" fill="#fff"/><path d="M11 5Q13.500 9 11 13" fill="none" stroke="#fff" stroke-width="1.200"/><path d="M13 2.500Q19 9 13 15.500" fill="none" stroke="#8c9396" stroke-width="1.200"/></svg></button>
    <button type="button" class="plain tray-btn" aria-label="Removable devices"><svg width="18" height="18" fill="none" stroke="#fff"><path d="M5.500 8.500V1.500H12.500V8.500" stroke-width="1.300"/><path d="M7.500 4V6M10.500 4V6" stroke-width="2"/><path d="M4.500 8.500H13.500V16.500H4.500Z"/><path d="M4 8.500H14M7 12.500H11" stroke-width="1.500"/></svg></button>
    <button type="button" class="plain tray-btn" aria-label="Network"><svg width="18" height="18" fill="none" stroke="#fff"><path d="M6 1.500H16.500V12.500H6.500"/><path d="M1.500 1.500H5V6.500H1.500ZM3.500 6.500V12M1.500 9.500V16.500H4"/><path d="M9 14.500H13M7 16H15" stroke-width="2"/></svg></button>
    <button type="button" class="plain tray-btn narrow" aria-label="Show hidden icons"><svg width="14" height="10" fill="none" stroke="#fff" stroke-width="1.200"><path d="M1 8L7 2L13 8"/></svg></button>
    <button type="button" class="plain clock d-flex flex-column justify-content-center align-items-center"><span class="hour">1:34 AM</span><span class="day">3/7/25</span></button>
    <button type="button" class="plain show-desk" aria-label="Show desktop"><svg width="16" height="16" fill="none" stroke="#fff"><path d="M.5 .5H15.500V15.500H.5ZM2 13.500H14"/></svg></button>
  </div>
</footer>

<script src="https://cdn.jsdelivr.net/npm/bootstrap@5.3.0/dist/js/bootstrap.bundle.min.js"></script>
</body>
</html>
